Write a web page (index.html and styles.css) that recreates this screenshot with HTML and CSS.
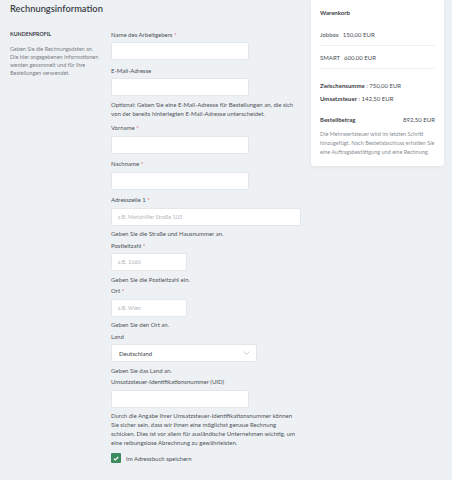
FILE: index.html
```html
<!DOCTYPE html>
<html lang="de">

<head>
    <meta charset="UTF-8">
    <meta name="viewport" content="width=device-width, initial-scale=1.0">
    <title>Rechnungsinformation</title>
    <link rel="stylesheet" href="styles.css">
</head>

<body>
    <div class="page">
        <main class="main">
            <h1 class="title">Rechnungsinformation</h1>
            <section class="section">
                <div class="intro">
                    <h2>KUNDENPROFIL</h2>
                    <p>Geben Sie die Rechnungsdaten an. Die hier angegebenen Informationen werden gesammelt und für Ihre Bestellungen verwendet.</p>
                </div>
                <form class="form">
                    <div class="field">
                        <label>Name des Arbeitgebers <span class="req">*</span></label>
                        <input type="text" class="input">
                    </div>
                    <div class="field has-help help-long">
                        <label>E-Mail-Adresse</label>
                        <input type="text" class="input">
                        <p class="help">Optional: Geben Sie eine E-Mail-Adresse für Bestellungen an, die sich von der bereits hinterlegten E-Mail-Adresse unterscheidet.</p>
                    </div>
                    <div class="field">
                        <label>Vorname <span class="req">*</span></label>
                        <input type="text" class="input">
                    </div>
                    <div class="field">
                        <label>Nachname <span class="req">*</span></label>
                        <input type="text" class="input">
                    </div>
                    <div class="field has-help">
                        <label>Adresszeile 1 <span class="req">*</span></label>
                        <input type="text" class="input input-wide" placeholder="z.B. Mariahilfer Straße 103">
                        <p class="help">Geben Sie die Straße und Hausnummer an.</p>
                    </div>
                    <div class="field has-help">
                        <label>Postleitzahl <span class="req">*</span></label>
                        <input type="text" class="input input-short" placeholder="z.B. 1060">
                        <p class="help">Geben Sie die Postleitzahl ein.</p>
                    </div>
                    <div class="field has-help">
                        <label>Ort <span class="req">*</span></label>
                        <input type="text" class="input input-short" placeholder="z.B. Wien">
                        <p class="help">Geben Sie den Ort an.</p>
                    </div>
                    <div class="field has-help">
                        <label>Land</label>
                        <div class="select">
                            <span>Deutschland</span>
                            <svg class="chevron" width="7" height="4" viewBox="0 0 7 4">
                                <polyline points="0.5,0.5 3.5,3.3 6.5,0.5" fill="none" stroke="#b5bac0" stroke-width="0.7" />
                            </svg>
                        </div>
                        <p class="help">Geben Sie das Land an.</p>
                    </div>
                    <div class="field has-help">
                        <label>Umsatzsteuer-Identifikationsnummer (UID)</label>
                        <input type="text" class="input">
                        <p class="help">Durch die Angabe Ihrer Umsatzsteuer-Identifikationsnummer können Sie sicher sein, dass wir Ihnen eine möglichst genaue Rechnung schicken. Dies ist vor allem für ausländische Unternehmen wichtig, um eine reibungslose Abrechnung zu gewährleisten.</p>
                    </div>
                    <div class="check">
                        <span class="check-box">
                            <svg width="6" height="5" viewBox="0 0 6 5">
                                <polyline points="0.8,2.6 2.3,4 5.2,1" fill="none" stroke="white" stroke-width="1.1" />
                            </svg>
                        </span>
                        <span>Im Adressbuch speichern</span>
                    </div>
                </form>
            </section>
        </main>
        <aside class="cart">
            <h3>Warenkorb</h3>
            <div class="cart-item"><span>Jobbox</span><span>150,00 EUR</span></div>
            <div class="cart-item"><span>SMART</span><span>600,00 EUR</span></div>
            <div class="totals">
                <div><b>Zwischensumme</b> : 750,00 EUR</div>
                <div><b>Umsatzsteuer</b> : 142,50 EUR</div>
            </div>
            <div class="grand-total"><b>Bestellbetrag</b><span>892,50 EUR</span></div>
            <p class="note">Die Mehrwertsteuer wird im letzten Schritt hinzugefügt. Nach Bestellabschluss erhalten Sie eine Auftragsbestätigung und eine Rechnung.</p>
        </aside>
    </div>
</body>

</html>
```

FILE: styles.css
```css
body {
    font-family: Lato, "Open Sans", sans-serif;
    margin: 0;
    padding: 0;
    background-color: #eef1f4;
    color: #4a4f55;
}

.page {
    display: grid;
    grid-template-columns: 291px 133px;
    column-gap: 10px;
    padding-left: 10px;
    align-items: start;
}

.title {
    font-size: 9.3px;
    line-height: 14px;
    font-weight: 600;
    color: #3b4046;
    margin: 2px 0 13.5px;
}

.section {
    display: grid;
    grid-template-columns: 91px 190px;
    column-gap: 10px;
    align-items: start;
}

.intro h2 {
    font-size: 5.3px;
    line-height: 8px;
    font-weight: 700;
    color: #3b4046;
    margin: 0;
}

.intro p {
    font-size: 5.5px;
    line-height: 8px;
    color: #7a7f86;
    margin: 7px 0 0;
}

.field {
    margin-bottom: 5.5px;
}

.field.has-help {
    margin-bottom: 2.5px;
}

.field.help-long {
    margin-bottom: 5px;
}

.field label {
    display: block;
    font-size: 6px;
    line-height: 9px;
    margin-bottom: 3.5px;
    color: #4a4f55;
}

.req {
    color: #e03b3b;
}

.input {
    display: block;
    box-sizing: border-box;
    width: 138px;
    height: 18px;
    margin: 0;
    padding: 0 6px;
    border: 1px solid #e3e6ea;
    border-radius: 2px;
    background-color: white;
    font-family: inherit;
    font-size: 5.5px;
}

.input::placeholder {
    color: #b3b7bd;
}

.input-wide {
    width: 190px;
}

.input-short {
    width: 76px;
}

.select {
    box-sizing: border-box;
    width: 146px;
    height: 18px;
    padding: 0 6px 0 7px;
    border: 1px solid #e3e6ea;
    border-radius: 2px;
    background-color: white;
    display: flex;
    align-items: center;
    justify-content: space-between;
    font-size: 6px;
    color: #3b4046;
}

.help {
    font-size: 6px;
    line-height: 9px;
    margin: 3.5px 0 0;
    color: #4f545a;
}

.help-long .help {
    line-height: 9.4px;
}

.check {
    display: flex;
    align-items: center;
    gap: 5px;
    margin-top: 6px;
    font-size: 6px;
    color: #4a4f55;
}

.check-box {
    width: 10px;
    height: 10px;
    border-radius: 1px;
    background-color: #3d8a5f;
    display: flex;
    align-items: center;
    justify-content: center;
}

.cart {
    background-color: white;
    border-radius: 0 0 3px 3px;
    box-shadow: 0 1px 4px rgba(0, 0, 0, 0.06);
    padding: 8px 9px 8.5px;
    font-size: 6px;
    color: #4a4f55;
}

.cart h3 {
    font-size: 6px;
    line-height: 9px;
    font-weight: 700;
    margin: 0 0 6px;
    color: #3b4046;
}

.cart-item {
    display: flex;
    gap: 4px;
    line-height: 9px;
    padding: 6.5px 0;
    border-bottom: 1px solid #eef0f2;
}

.totals {
    margin-top: 11.5px;
    line-height: 9px;
}

.totals div + div {
    margin-top: 4px;
}

.totals b,
.grand-total b {
    color: #3b4046;
}

.grand-total {
    display: flex;
    justify-content: space-between;
    line-height: 9px;
    margin-top: 12.5px;
}

.note {
    font-size: 5.5px;
    line-height: 9.2px;
    color: #8a8f96;
    margin: 6px 0 0;
}
```
